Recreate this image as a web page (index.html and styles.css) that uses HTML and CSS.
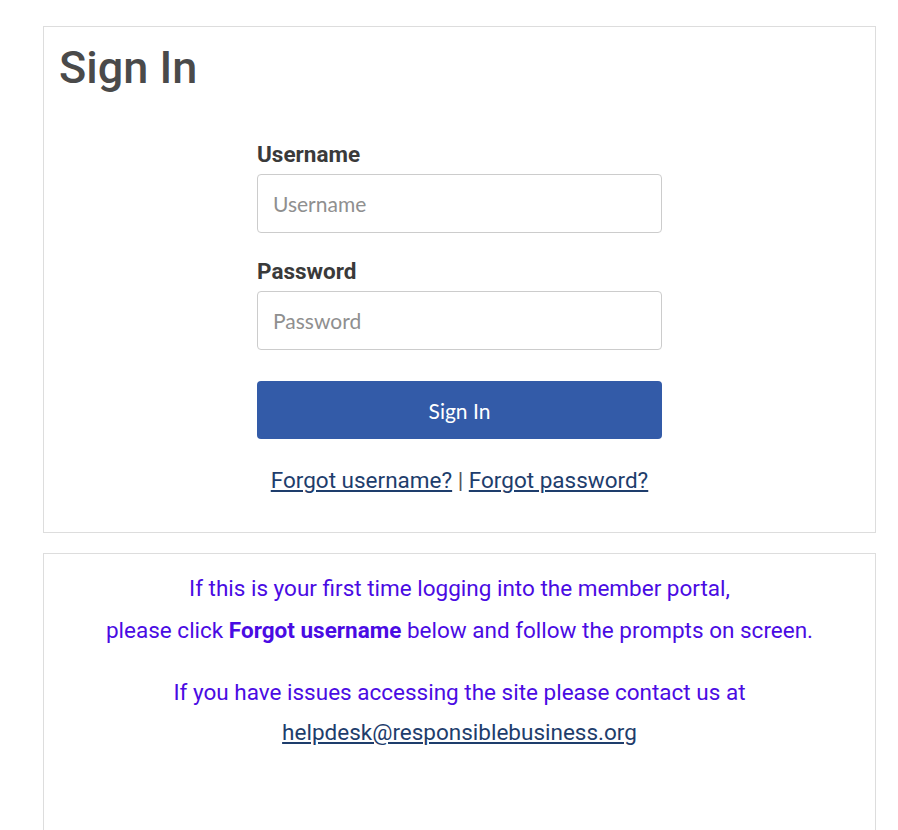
FILE: index.html
```html
<!DOCTYPE html>
<html lang="en">
<head>
<meta charset="utf-8">
<title>Sign In</title>
<link rel="stylesheet" href="styles.css">
</head>
<body>
<div class="wrap">
  <section class="card signin">
    <h1 class="title">Sign In</h1>
    <form class="form">
      <label class="label" for="u">Username</label>
      <input class="input" id="u" type="text" placeholder="Username">
      <label class="label second" for="p">Password</label>
      <input class="input" id="p" type="password" placeholder="Password">
      <button class="btn" type="button">Sign In</button>
      <div class="links"><a href="#">Forgot username?</a> | <a href="#">Forgot password?</a></div>
    </form>
  </section>
  <section class="card info">
    <p class="para">If this is your first time logging into the member portal,<br>please click <strong>Forgot username</strong> below and follow the prompts on screen.</p>
    <p class="para contact">If you have issues accessing the site please contact us at<br><a class="mail" href="#">helpdesk@responsiblebusiness.org</a></p>
  </section>
</div>
</body>
</html>
```

FILE: styles.css
```css
html, body {
  margin: 0;
  padding: 0;
  background: #fff;
}
body {
  font-family: Roboto, "Liberation Sans", sans-serif;
  color: #333;
}
.wrap {
  width: 833px;
  margin-left: 43px;
  padding-top: 26px;
}
.card {
  box-sizing: border-box;
  border: 1px solid #dddddd;
}
.signin {
  padding: 15px 15px 39px 15px;
}
.title {
  margin: 0;
  font-size: 45px;
  line-height: 52px;
  font-weight: 500;
  color: #4a4a4a;
}
.form {
  width: 405px;
  margin: 48px auto 0;
  display: flex;
  flex-direction: column;
}
.label {
  font-size: 22.5px;
  line-height: 24px;
  font-weight: 700;
  color: #3a3a3a;
  margin-bottom: 8px;
}
.label.second {
  margin-top: 26px;
}
.input {
  box-sizing: border-box;
  height: 59px;
  width: 100%;
  border: 1px solid #cccccc;
  border-radius: 4px;
  padding: 0 15px;
  font-family: Lato, "Open Sans", sans-serif;
  font-size: 21px;
  color: #333;
  outline: none;
}
.input::placeholder {
  color: #8f8f8f;
}
.btn {
  margin-top: 31px;
  height: 58px;
  border: none;
  border-radius: 4px;
  background: #335ba8;
  color: #fff;
  font-family: Lato, "Open Sans", sans-serif;
  font-size: 21px;
  cursor: pointer;
}
.links {
  margin-top: 29px;
  text-align: center;
  font-size: 22.5px;
  line-height: 25px;
  color: #555;
}
.links a {
  color: #1e3d6c;
  text-decoration: underline;
}
.info {
  margin-top: 20px;
  min-height: 300px;
  padding: 13px 15px;
  text-align: center;
}
.para {
  margin: 0;
  font-size: 22.5px;
  line-height: 42px;
  color: #4a0be3;
}
.para.contact {
  margin-top: 21px;
  line-height: 40px;
}
.para strong {
  font-weight: 700;
}
.mail {
  color: #1e3d6c;
  text-decoration: underline;
}
```
